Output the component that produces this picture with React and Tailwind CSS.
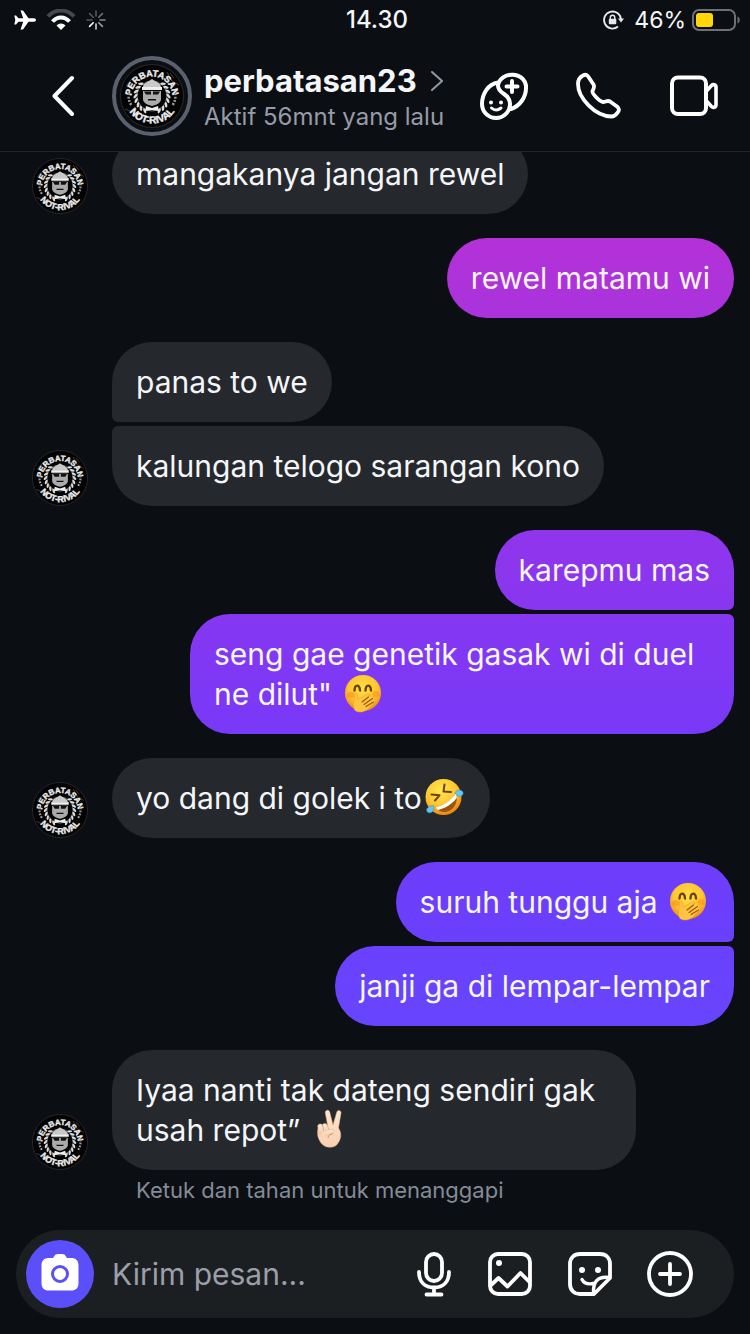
import React, { useId, useState } from "react";

const messages = [
  { id: 1, from: "them", items: [{ text: "mangakanya jangan rewel" }] },
  {
    id: 2,
    from: "me",
    items: [{ text: "rewel matamu wi", tone: "bg-linear-to-b from-[#b431d8] to-[#a933dc]" }],
  },
  {
    id: 3,
    from: "them",
    items: [{ text: "panas to we" }, { text: "kalungan telogo sarangan kono" }],
  },
  {
    id: 4,
    from: "me",
    items: [
      { text: "karepmu mas", tone: "bg-linear-to-b from-[#9035ec] to-[#8836f0]" },
      {
        text: 'seng gae genetik gasak wi di duel ne dilut" ',
        emoji: "giggle",
        tone: "bg-linear-to-b from-[#8637f1] to-[#7839f8]",
      },
    ],
  },
  { id: 5, from: "them", items: [{ text: "yo dang di golek i to", emoji: "rofl" }] },
  {
    id: 6,
    from: "me",
    items: [
      { text: "suruh tunggu aja ", emoji: "giggle", tone: "bg-linear-to-b from-[#6e3dfc] to-[#6a40fc]" },
      { text: "janji ga di lempar-lempar", tone: "bg-linear-to-b from-[#6a41fd] to-[#6745fd]" },
    ],
  },
  {
    id: 7,
    from: "them",
    items: [{ text: "Iyaa nanti tak dateng sendiri gak usah repot” ", emoji: "peace" }],
    hint: "Ketuk dan tahan untuk menanggapi",
  },
];

const emojiClass = "inline-block size-10 mx-0.5 -mt-3 -mb-1 align-middle";

const Giggle = () => {
  const id = useId();
  return (
    <svg viewBox="0 0 40 40" className={emojiClass} role="img" aria-label="🤭">
      <defs>
        <radialGradient id={id} cx="50%" cy="38%" r="62%">
          <stop offset="0" stopColor="#ffe04a" />
          <stop offset="0.65" stopColor="#ffc62d" />
          <stop offset="1" stopColor="#f08a12" />
        </radialGradient>
      </defs>
      <circle cx="20" cy="20" r="18" fill={`url(#${id})`} />
      <ellipse cx="8" cy="22" rx="4" ry="3" fill="#ff7a2a" opacity="0.45" />
      <ellipse cx="33" cy="21" rx="3.500" ry="3" fill="#ff7a2a" opacity="0.45" />
      <path d="M11.500 17.500c.3-6.500 5-6.500 5.500 0M22.500 17.500c.3-6.500 5-6.500 5.500 0" fill="none" stroke="#6b4208" strokeWidth="2.400" strokeLinecap="round" />
      <path
        d="M12 37.500c-2-3-2-7-1-10.500l.5-5.500c.3-2 2.800-1.800 3 .2l.6 4.800 9-5.500c1.700-.9 2.900.6 1.700 1.900l3-1.500c1.700-.6 2.500 1.200 1.200 2.300 1.800-.4 2.400 1.400 1.100 2.500 1.500 0 1.500 1.600.4 2.600C28.500 33 25 37 20.500 38.500c-3 1-6.500.5-8.500-1z"
        fill="#ffc540"
        stroke="#f0a020"
        strokeWidth="0.600"
      />
      <path d="M19 29l6.500-5M21 31.500l8.500-6M23 33.500l7.500-4.500" stroke="#9a5a0a" strokeWidth="1.200" strokeLinecap="round" />
    </svg>
  );
};

const Rofl = () => {
  const id = useId();
  return (
    <svg viewBox="0 0 40 40" className={emojiClass} role="img" aria-label="🤣">
      <defs>
        <radialGradient id={id} cx="42%" cy="32%" r="66%">
          <stop offset="0" stopColor="#ffe750" />
          <stop offset="0.65" stopColor="#ffc62d" />
          <stop offset="1" stopColor="#ef8a10" />
        </radialGradient>
      </defs>
      <circle cx="19.500" cy="20" r="18" fill={`url(#${id})`} />
      <path d="M7.500 17.500l8 .8-4.500 5.200M20.500 7.500l-1 7 7.500.5" fill="none" stroke="#70410a" strokeWidth="2" strokeLinecap="round" strokeLinejoin="round" />
      <path d="M11.500 30.500c8-2 15-7 20.500-14 2.500 7-1 15-7 17.500-5 2-10 1-13.500-3.500z" fill="#9a560c" />
      <path d="M11.500 30.500c8-2 15-7 20.500-14 .6 1.500.8 3 .7 4.500C28 27 21 31.500 14 33c-1-.7-1.800-1.500-2.500-2.500z" fill="#fff" />
      <path d="M31 15.500c1.500-2.500 6-3 7.500-1s0 4.500-2.500 4.800c-2 .1-4.500-1.500-5-3.800zM9.500 28.500c.8 3 .2 6-2.500 7s-4.300-.6-4.300-2.700c0-2.300 4-4 6.800-4.300z" fill="#62c8f3" stroke="#2d9bd3" strokeWidth="0.600" />
    </svg>
  );
};

const Peace = () => {
  const id = useId();
  return (
    <svg viewBox="0 0 40 40" className={emojiClass} role="img" aria-label="✌🏻">
      <defs>
        <linearGradient id={id} x1="0" y1="0" x2="0" y2="1">
          <stop offset="0" stopColor="#fde6d0" />
          <stop offset="1" stopColor="#f8cfae" />
        </linearGradient>
      </defs>
      <g fill={`url(#${id})`} stroke="#dfa987" strokeWidth="0.500" strokeLinejoin="round">
        <path d="M17.500 21L14.300 4c-.6-3 3.300-4 4.400-1.200L22 16 25.800 3c1-2.700 4.700-1.700 4.200 1.200L27.500 19c2.800 4 3 9 .8 13-1.600 3-3.300 6-8.500 6.200-5.300.2-8.300-2-10.300-5C7 29.500 6 25.500 6.800 21z" />
        <path d="M6.800 16.500c1-2.200 4.300-2 4.900.2l1.100 5.500c.4 3-4.800 3.800-5.800 1.200z" />
        <path d="M11.500 15.500c1.500-1.800 4.200-1.300 4.900.7l1.600 5.300c.7 2.800-4 4-4.900 1.300z" />
        <path d="M9.500 24c4-2.700 8-3.700 11.500-3.500 2.800.4 2.600 3.800.2 4-3 .1-5 1-7 3" />
      </g>
      <path d="M17 28.500c.5-2.200 2-3.300 4.500-3.700" fill="none" stroke="#c98661" strokeWidth="0.900" strokeLinecap="round" />
    </svg>
  );
};

const emojis = { giggle: Giggle, rofl: Rofl, peace: Peace };

const Avatar = ({ className }) => {
  const id = useId();
  const leaves = [42, 58, 74, 90, 106, 122, 138, 154];
  return (
    <svg viewBox="0 0 64 64" className={className} role="img" aria-label="perbatasan23">
      <defs>
        <path id={`${id}t`} d="M11.500 33A20.500 20.500 0 0 1 52.500 33" />
        <path id={`${id}b`} d="M4.500 32A27.500 27.500 0 0 0 59.500 32" />
      </defs>
      <circle cx="32" cy="32" r="31.500" fill="#030303" stroke="#2a2a2d" />
      <path d="M47 8l5 9 7 4M5 45l9 4 3 7M50 9l4 5M6 22l5-6" stroke="#444" fill="none" />
      <g fill="#ededed" stroke="#ededed" strokeWidth="0.400" fontFamily="Liberation Sans Narrow, Liberation Sans, sans-serif" fontWeight="bold">
        <text textAnchor="middle" fontSize="9">
          <textPath href={`#${id}t`} startOffset="50%">PERBATASAN</textPath>
        </text>
        <text textAnchor="middle" fontSize="10">
          <textPath href={`#${id}b`} startOffset="50%">NOT-RIVAL</textPath>
        </text>
      </g>
      <path d="M9 29c-1 5 0 9 3 13M55 29c1 5 0 9-3 13" fill="none" stroke="#9a9a9a" strokeWidth="2.500" strokeDasharray="2 1.500" />
      <circle cx="32" cy="32" r="15" fill="none" stroke="#8a8a8a" strokeWidth="0.800" />
      {leaves.map((a) => (
        <g key={a} fill="#dcdcdc">
          <ellipse cx="32" cy="15.500" rx="1.300" ry="2.800" transform={`rotate(${a} 32 32) rotate(50 32 15.500)`} />
          <ellipse cx="32" cy="15.500" rx="1.300" ry="2.800" transform={`rotate(${-a} 32 32) rotate(-50 32 15.500)`} />
        </g>
      ))}
      <path d="M23 23c0-4 5-5 9-8 4 3 9 4 9 8z" fill="#c9c9c9" />
      <path d="M22 23h20v3H22z" fill="#efefef" />
      <path d="M23 27h18v8c0 4-5 6-9 7-4-1-9-3-9-7z" fill="#ababab" />
      <path d="M24 27.500h7v3h-5zM33 27.500h7l-2 3h-5zM28 35h8v1.500h-8z" fill="#111" />
      <path d="M26 42l6 2 6-2 1 5-7-1-7 1z" fill="#ededed" />
    </svg>
  );
};

const StatusBar = () => (
  <div className="grid grid-cols-3 items-center h-10 pl-3.5 pr-2.5">
    <div className="flex items-center gap-2.5">
      <svg viewBox="0 0 22 20" className="w-[22px] h-5" fill="white" aria-label="Mode pesawat">
        <path d="M20 8.300h-5.500L9 .5H6.500l2.700 7.800H4.500L2 5.500H.3L1.300 10 .3 14.500H2l2.500-2.800h4.700l-2.700 7.800H9l5.500-7.800H20c2.600 0 2.600-3.400 0-3.400z" />
      </svg>
      <svg viewBox="0 0 30 22" className="w-[30px] h-[22px]" fill="none" aria-label="Wi-Fi">
        <path d="M2 7.500C9-.5 21-.5 28 7.500" stroke="#45494c" strokeWidth="4" />
        <path d="M6.500 12.500c5-5.500 12-5.500 17 0" stroke="white" strokeWidth="4" />
        <path d="M10.500 16.500c2.500-2.700 6.500-2.700 9 0L15 21z" fill="white" />
      </svg>
      <svg viewBox="0 0 20 20" className="size-5" stroke="white" strokeWidth="1.600" strokeLinecap="round" aria-label="Memuat">
        <path d="M10 1v5" opacity="0.3" />
        <path d="M16.400 3.600l-3.600 3.600" opacity="0.4" />
        <path d="M19 10h-5" opacity="0.5" />
        <path d="M16.400 16.400l-3.600-3.600" opacity="0.6" />
        <path d="M10 19v-5" opacity="0.8" />
        <path d="M3.600 16.400l3.600-3.600" />
        <path d="M1 10h5" opacity="0.3" />
        <path d="M3.600 3.600l3.600 3.600" opacity="0.3" />
      </svg>
    </div>
    <time className="text-center text-2xl font-medium">14.30</time>
    <div className="flex items-center justify-end gap-1.5 text-[23px]">
      <svg viewBox="0 0 22 22" className="size-[22px] mr-1" fill="none" stroke="#e6e8ea" strokeWidth="1.800" aria-label="Kunci orientasi">
        <path d="M19 10.500A8.500 8.500 0 1 0 16 17.500" />
        <path d="M16 9.500h6l-3 4z" fill="#e6e8ea" stroke="none" />
        <rect x="6.800" y="9.800" width="7.500" height="5.500" rx="1" fill="#e6e8ea" stroke="none" />
        <path d="M8.300 10V8.500a2.200 2.200 0 0 1 4.500 0V10" strokeWidth="1.400" />
      </svg>
      <span>46%</span>
      <svg viewBox="0 0 48 24" className="w-12 h-6" fill="none" aria-label="Baterai">
        <rect x="1" y="2" width="42" height="20" rx="6" stroke="#6d7175" strokeWidth="2" />
        <rect x="4" y="5" width="17" height="14" rx="3" fill="#ffd60a" />
        <path d="M45.500 8.500c3 1 3 6 0 7z" fill="#6d7175" />
      </svg>
    </div>
  </div>
);

const Header = () => (
  <header className="flex items-center h-28 pl-[52px] pr-8 border-b border-[#20262a]">
    <button type="button" aria-label="Kembali" className="mr-9">
      <svg viewBox="0 0 24 42" className="w-6 h-[42px]" fill="none" stroke="white" strokeWidth="4" strokeLinecap="round" strokeLinejoin="round">
        <path d="M20 3L2.500 21 20 39" />
      </svg>
    </button>
    <div className="size-20 shrink-0 rounded-full border-4 border-[#5a606c] p-1">
      <Avatar className="size-full" />
    </div>
    <div className="flex-1 min-w-0 ml-3 pt-1.5 whitespace-nowrap">
      <h1>
        <a href="#profile" className="flex items-center gap-3.5 text-[31px] font-bold leading-9">
          perbatasan23
          <svg viewBox="0 0 12 20" className="w-3 h-5" fill="none" stroke="#9298a3" strokeWidth="2" strokeLinecap="round">
            <path d="M1 1l10 9L1 19" />
          </svg>
        </a>
      </h1>
      <p className="text-2xl leading-9 text-[#969ba7]">Aktif 56mnt yang lalu</p>
    </div>
    <div className="flex items-center gap-[47px]">
      <button type="button" aria-label="Tambah orang">
        <svg viewBox="0 0 48 48" className="size-12" fill="none" stroke="white" strokeWidth="4" strokeLinecap="round">
          <path d="M18 10.500C8 12 2 22 2 32a14 14 0 0 0 28 0c0-5-3-8-6-10s-6-4.500-6-8.500a14 12 0 0 1 28 2.500c0 9-6 18-15 21" />
          <path d="M32 9v11M26.500 14.500h11" />
          <path d="M11.500 36q4.500 4 9.500 0" strokeWidth="3" />
          <circle cx="11" cy="30.500" r="2" fill="white" stroke="none" />
          <circle cx="21" cy="30.500" r="2" fill="white" stroke="none" />
        </svg>
      </button>
      <button type="button" aria-label="Panggilan suara">
        <svg viewBox="0 0 48 48" className="size-12" fill="none" stroke="white" strokeWidth="3.800" strokeLinejoin="round">
          <path d="M8 3.500c2-1.200 4-.8 5.200 1l5.300 8c1.500 2.500 0 4-1 6.500-.7 2.500 7 10.500 10.500 11 2.500 0 4.500-2 7-.5l7 5c2 1.500 2.500 4 1 5.500-1.500 2-3 4.500-6.500 4.500C20 44 3 26 3 12c0-4 2-7 5-8.500z" />
        </svg>
      </button>
      <button type="button" aria-label="Panggilan video">
        <svg viewBox="0 0 48 48" className="size-12" fill="none" stroke="white" strokeWidth="4" strokeLinejoin="round">
          <rect x="2" y="5.500" width="34" height="36.500" rx="6" />
          <path d="M36.500 19l5-5.500c1.500-1.500 4.500-1 4.500 1.500v18c0 2.500-3 3-4.500 1.500l-5-5.500" strokeWidth="3.600" />
        </svg>
      </button>
    </div>
  </header>
);

const Bubble = ({ item, mine, first, last }) => {
  const Emoji = emojis[item.emoji];
  let shape = "rounded-[40px]";
  if (mine && !last) shape += " rounded-br-md";
  if (mine && !first) shape += " rounded-tr-md";
  if (!mine && !last) shape += " rounded-bl-md";
  if (!mine && !first) shape += " rounded-tl-md";

  return (
    <p
      className={`px-6 py-5 text-3xl leading-10 ${shape} ${
        mine ? `max-w-[544px] ${item.tone}` : "max-w-[524px] bg-[#25282d]"
      }`}
    >
      {item.text}
      {Emoji && <Emoji />}
    </p>
  );
};

const Group = ({ group }) => {
  const mine = group.from === "me";
  return (
    <section className="shrink-0 pl-8 pr-4">
      <div className="flex items-end gap-6">
        {!mine && <Avatar className="size-14 shrink-0" />}
        <div className={`flex flex-1 flex-col gap-1 ${mine ? "items-end" : "items-start"}`}>
          {group.items.map((item, idx) => (
            <Bubble
              key={item.text}
              item={item}
              mine={mine}
              first={idx === 0}
              last={idx === group.items.length - 1}
            />
          ))}
        </div>
      </div>
      {group.hint && (
        <p className="pl-26 pt-1 text-[22px] leading-8 text-[#858b97]">{group.hint}</p>
      )}
    </section>
  );
};

const Composer = () => {
  const [draft, setDraft] = useState("");

  return (
    <form
      onSubmit={(e) => e.preventDefault()}
      className="flex items-center h-22 mx-4 mt-6 mb-4 pl-2.5 pr-10 rounded-full bg-[#1c1f21]"
    >
      <button
        type="button"
        aria-label="Kamera"
        className="flex items-center justify-center size-[68px] shrink-0 rounded-full bg-[#5b4ffa]"
      >
        <svg viewBox="0 0 40 40" className="size-10" fill="white">
          <path d="M14 2.500C15 .8 16 0 18 0h4c2 0 3 .8 4 2.500l1 1.500h4c5 0 7.500 2.500 7.500 7.500V29c0 5-2.500 7.500-7.500 7.500H9c-5 0-7.500-2.500-7.500-7.500V11.500C1.500 6.500 4 4 9 4h4z" />
          <circle cx="20" cy="20" r="7.500" fill="none" stroke="#5b4ffa" strokeWidth="3" />
        </svg>
      </button>
      <input
        type="text"
        aria-label="Kirim pesan"
        placeholder="Kirim pesan..."
        value={draft}
        onChange={(e) => setDraft(e.target.value)}
        className="flex-1 min-w-0 ml-4.5 text-3xl bg-transparent outline-none placeholder:text-[#9a9faa]"
      />
      <div className="flex items-center gap-8">
        <button type="button" aria-label="Pesan suara">
          <svg viewBox="0 0 40 48" className="w-10 h-12" fill="none" stroke="white" strokeWidth="3.800" strokeLinecap="round">
            <rect x="12" y="4" width="16" height="27" rx="8" />
            <path d="M5 22c0 10 6 15.500 15 15.500S35 32 35 22M20 38v6M12.500 44.500h15" />
          </svg>
        </button>
        <button type="button" aria-label="Galeri">
          <svg viewBox="0 0 48 48" className="size-12" fill="none" stroke="white" strokeWidth="3.800" strokeLinejoin="round">
            <rect x="4" y="4" width="40" height="40" rx="8" />
            <path d="M4 36l8.500-8 9 8.500L34.500 23l9.500 9.500" />
            <circle cx="13" cy="13" r="3" fill="white" stroke="none" />
          </svg>
        </button>
        <button type="button" aria-label="Stiker">
          <svg viewBox="0 0 48 48" className="size-12" fill="none" stroke="white" strokeWidth="3.800" strokeLinejoin="round" strokeLinecap="round">
            <path d="M28 44H14C8 44 4 40 4 34V14C4 8 8 4 14 4h20c6 0 10 4 10 10v14z" />
            <path d="M43.500 27.500C31 26 27 32 27.500 43M16 29.500c2 4 6 5 11.500 4" strokeWidth="3.400" />
            <circle cx="16" cy="20" r="3" fill="white" stroke="none" />
            <circle cx="32" cy="20" r="3" fill="white" stroke="none" />
          </svg>
        </button>
        <button type="button" aria-label="Lainnya">
          <svg viewBox="0 0 48 48" className="size-12" fill="none" stroke="white" strokeWidth="3.800" strokeLinecap="round">
            <circle cx="24" cy="24" r="21" />
            <path d="M24 14v20M14 24h20" />
          </svg>
        </button>
      </div>
    </form>
  );
};

export default function App() {
  return (
    <div className="flex flex-col h-screen overflow-hidden bg-[#0b0f13] text-[#f5f6f8] font-[Inter,sans-serif]">
      <StatusBar />
      <Header />
      <main className="flex flex-1 min-h-0 flex-col justify-end gap-6 overflow-hidden">
        {messages.map((group) => (
          <Group key={group.id} group={group} />
        ))}
      </main>
      <Composer />
    </div>
  );
}
